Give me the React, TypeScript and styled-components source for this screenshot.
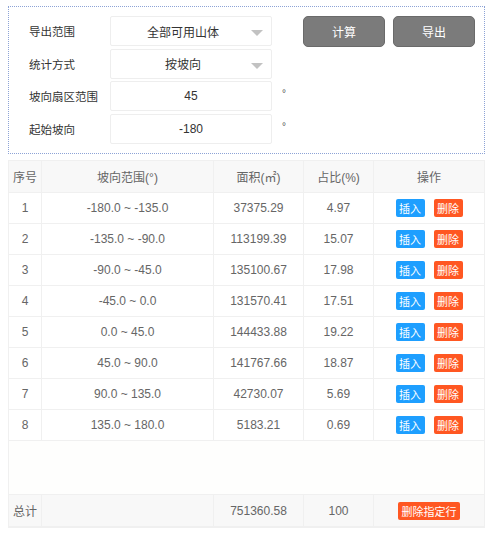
import styled, { createGlobalStyle } from "styled-components";

const GlobalStyle = createGlobalStyle`
  body {
    margin: 0;
    background: #fff;
    font-family: "Liberation Sans", "Noto Sans CJK SC", sans-serif;
    color: #333;
  }
`;

const Page = styled.div`
  padding: 6px 8px 0 8px;
  width: 477px;
`;

const FilterBox = styled.div`
  display: flex;
  align-items: flex-start;
  border: 1px dotted #8da3d6;
  padding: 9px 9px 7px 20px;
  height: 130px;
`;

const Form = styled.div`
  display: grid;
  grid-template-columns: 81px 162px 20px;
  grid-auto-rows: 30px;
  row-gap: 2.5px;
  align-items: center;
`;

const Label = styled.div`
  font-size: 11.5px;
  color: #333;
`;

const Field = styled.div<{ $select?: boolean }>`
  position: relative;
  height: 30px;
  box-sizing: border-box;
  border: 1px solid #eeeeee;
  border-radius: 2px;
  display: flex;
  align-items: center;
  justify-content: center;
  padding-right: ${(p) => (p.$select ? "16px" : "0")};
  font-size: 12px;
  color: #333;
`;

const Arrow = styled.span`
  position: absolute;
  right: 8px;
  top: 13px;
  width: 0;
  height: 0;
  border-left: 6px solid transparent;
  border-right: 6px solid transparent;
  border-top: 6px solid #c2c2c2;
`;

const Unit = styled.span`
  font-size: 10px;
  color: #555;
  margin-left: 10px;
  align-self: start;
  padding-top: 7px;
`;

const Actions = styled.div`
  margin-left: auto;
  display: flex;
  gap: 8px;
`;

const GrayButton = styled.button`
  width: 82px;
  height: 31px;
  border: 1px solid #6a6a6a;
  border-radius: 5px;
  background: #7b7b7b;
  color: #fff;
  font-family: "Noto Sans CJK SC", sans-serif;
  font-size: 12px;
  padding: 0;
`;

const Table = styled.div`
  margin-top: 6px;
  border: 1px solid #f0f0f0;
  font-size: 12px;
  color: #666;
`;

const Row = styled.div<{ $head?: boolean }>`
  display: grid;
  grid-template-columns: 33px 172px 90px 70px 1fr;
  height: ${(p) => (p.$head ? "31px" : "30px")};
  background: ${(p) => (p.$head ? "#f8f8f8" : "#fff")};
  border-bottom: 1px solid #f0f0f0;
`;

const Cell = styled.div<{ $left?: boolean }>`
  display: flex;
  align-items: center;
  justify-content: ${(p) => (p.$left ? "flex-start" : "center")};
  padding-left: ${(p) => (p.$left ? "4px" : "0")};
  gap: 9px;
  &:not(:last-child) {
    border-right: 1px solid #f0f0f0;
  }
`;

const Spacer = styled.div`
  height: 53px;
  background: #fefefd;
  border-bottom: 1px solid #f0f0f0;
`;

const SmallButton = styled.button<{ $kind: "normal" | "danger" }>`
  height: 18px;
  padding: 0 3.5px;
  border: none;
  border-radius: 2px;
  background: ${(p) => (p.$kind === "danger" ? "#ff5722" : "#1e9fff")};
  color: #fff;
  font-family: "Noto Sans CJK SC", sans-serif;
  font-size: 11px;
  line-height: 18px;
`;

const rows = [
  ["1", "-180.0 ~ -135.0", "37375.29", "4.97"],
  ["2", "-135.0 ~ -90.0", "113199.39", "15.07"],
  ["3", "-90.0 ~ -45.0", "135100.67", "17.98"],
  ["4", "-45.0 ~ 0.0", "131570.41", "17.51"],
  ["5", "0.0 ~ 45.0", "144433.88", "19.22"],
  ["6", "45.0 ~ 90.0", "141767.66", "18.87"],
  ["7", "90.0 ~ 135.0", "42730.07", "5.69"],
  ["8", "135.0 ~ 180.0", "5183.21", "0.69"],
];

export default function App() {
  return (
    <>
      <GlobalStyle />
      <Page>
        <FilterBox>
          <Form>
            <Label>导出范围</Label>
            <Field $select>
              全部可用山体
              <Arrow />
            </Field>
            <span />
            <Label>统计方式</Label>
            <Field $select>
              按坡向
              <Arrow />
            </Field>
            <span />
            <Label>坡向扇区范围</Label>
            <Field>45</Field>
            <Unit>°</Unit>
            <Label>起始坡向</Label>
            <Field>-180</Field>
            <Unit>°</Unit>
          </Form>
          <Actions>
            <GrayButton>计算</GrayButton>
            <GrayButton>导出</GrayButton>
          </Actions>
        </FilterBox>

        <Table>
          <Row $head>
            <Cell>序号</Cell>
            <Cell>坡向范围(°)</Cell>
            <Cell>面积(㎡)</Cell>
            <Cell>占比(%)</Cell>
            <Cell>操作</Cell>
          </Row>
          {rows.map((r) => (
            <Row key={r[0]}>
              <Cell>{r[0]}</Cell>
              <Cell>{r[1]}</Cell>
              <Cell>{r[2]}</Cell>
              <Cell>{r[3]}</Cell>
              <Cell>
                <SmallButton $kind="normal">插入</SmallButton>
                <SmallButton $kind="danger">删除</SmallButton>
              </Cell>
            </Row>
          ))}
          <Spacer />
          <Row $head>
            <Cell $left>总计</Cell>
            <Cell />
            <Cell>751360.58</Cell>
            <Cell>100</Cell>
            <Cell>
              <SmallButton $kind="danger">删除指定行</SmallButton>
            </Cell>
          </Row>
        </Table>
      </Page>
    </>
  );
}
